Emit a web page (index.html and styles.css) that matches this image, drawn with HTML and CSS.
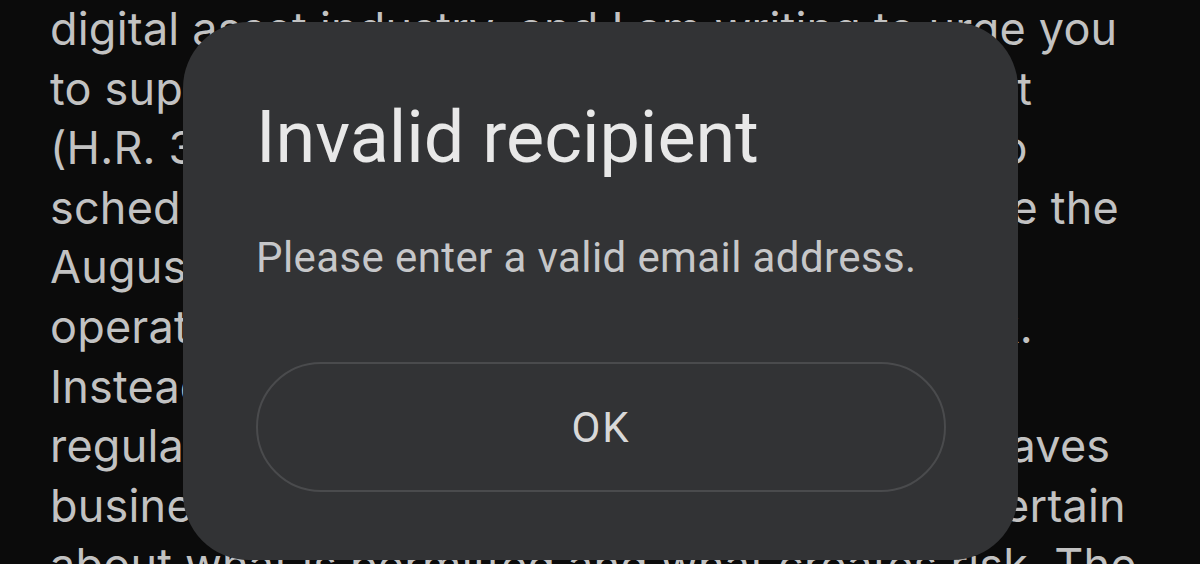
FILE: index.html
```html
<!DOCTYPE html>
<html lang="en">
<head>
  <meta charset="UTF-8">
  <meta name="viewport" content="width=device-width, initial-scale=1.0">
  <title>Invalid recipient</title>
  <link rel="stylesheet" href="styles.css">
</head>
<body>
  <!-- letter text behind the alert -->
  <div class="letter">
    <div class="line">digital asset industry, and I am writing to urge you</div>
    <div class="line">to support the Digital Asset Market Clarity Act</div>
    <div class="line">(H.R. 3633) when it comes to the floor, and to</div>
    <div class="line">schedule a floor vote, and pass this bill before the</div>
    <div class="line">August recess. For too long, firms had to</div>
    <div class="line">operate without a clear regulatory framework.</div>
    <div class="line">Instead, they face shifting guidance from</div>
    <div class="line">regulators, an approach that confuses and leaves</div>
    <div class="line">businesses, builders, and entrepreneurs uncertain</div>
    <div class="line">about what is permitted and what creates risk. The</div>
  </div>

  <div class="dialog" role="alertdialog">
    <h1 class="dialog-title">Invalid recipient</h1>
    <p class="dialog-text">Please enter a valid email address.</p>
    <button class="dialog-btn" type="button">OK</button>
  </div>
</body>
</html>
```

FILE: styles.css
```css
body {
  margin: 0;
  height: 100vh;
  overflow: hidden;
  background-color: #0b0b0b;
  position: relative;
}
.letter {
  padding-left: 50px;
  margin-top: -1px;
  font-family: Inter, "Liberation Sans", sans-serif;
  font-size: 45px;
  line-height: 59.6px;
  letter-spacing: 0.2px;
  color: #c2c2c2;
}
.line {
  white-space: nowrap;
}

/* alert box */
.dialog {
  position: absolute;
  left: 183px;
  top: 22px;
  width: 835px;
  height: 538px;
  box-sizing: border-box;
  padding: 74px 72px 0 73px;
  background-color: #323335;
  border-radius: 66px;
  display: flex;
  flex-direction: column;
  font-family: Roboto, "Noto Sans", sans-serif;
}
.dialog-title {
  margin: 0;
  font-size: 72px;
  font-weight: 400;
  line-height: 84px;
  color: #e8e8e8;
}
.dialog-text {
  margin: 53px 0 0;
  font-size: 42px;
  line-height: 50px;
  letter-spacing: 0.4px;
  color: #c6c7c9;
}
.dialog-btn {
  margin-top: 79px;
  height: 130px;
  border: 2px solid #4a4b4d;
  border-radius: 65px;
  background: transparent;
  color: #d8d8d8;
  font-family: inherit;
  font-size: 42px;
  font-weight: 400;
  letter-spacing: 2px;
  cursor: pointer;
}
```
